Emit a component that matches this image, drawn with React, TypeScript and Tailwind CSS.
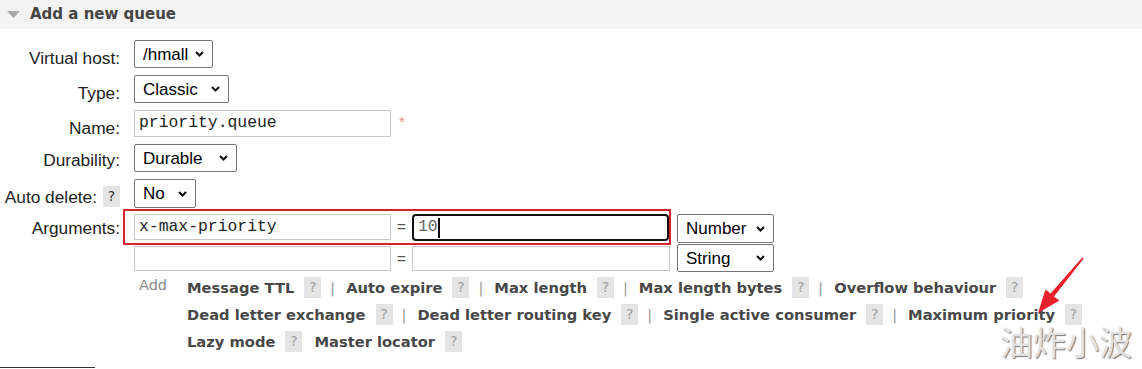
import React from 'react'

// ============================================================================
// Constants
// ============================================================================

const LINK_ROWS: { items: string[]; separators: boolean }[] = [
  {
    items: ['Message TTL', 'Auto expire', 'Max length', 'Max length bytes', 'Overflow behaviour'],
    separators: true,
  },
  {
    items: ['Dead letter exchange', 'Dead letter routing key', 'Single active consumer', 'Maximum priority'],
    separators: true,
  },
  { items: ['Lazy mode', 'Master locator'], separators: false },
]

// ============================================================================
// Small pieces
// ============================================================================

function Chevron() {
  return (
    <svg width="9" height="6" viewBox="0 0 9 6" className="shrink-0">
      <path d="M1 1l3.5 3.5L8 1" fill="none" stroke="#111" strokeWidth="2" />
    </svg>
  )
}

function Select({ value, className }: { value: string; className: string }) {
  return (
    <div
      className={`flex items-center justify-between border border-[#767676] rounded-[2px] bg-white pl-[8px] pr-[8px] text-[17px] text-black font-['Liberation_Sans',Arial,sans-serif] ${className}`}
    >
      <span className="leading-none">{value}</span>
      <Chevron />
    </div>
  )
}

function TextInput({ value, className }: { value?: string; className: string }) {
  return (
    <div
      className={`flex items-center border border-[#c8c8c8] bg-white pl-[4px] text-[16.4px] text-[#222] font-['Liberation_Mono','Courier_New',monospace] ${className}`}
    >
      {value}
    </div>
  )
}

function Help({ dark }: { dark?: boolean }) {
  return (
    <span
      className={`inline-flex items-center justify-center w-[17px] h-[21px] bg-[#e4e4e4] text-[14px] font-['DejaVu_Sans',Verdana,sans-serif] ${
        dark ? 'text-[#333]' : 'text-[#a0a0a0]'
      }`}
    >
      ?
    </span>
  )
}

function Row({
  label,
  labelPt,
  height,
  children,
}: {
  label: React.ReactNode
  labelPt: string
  height: string
  children: React.ReactNode
}) {
  return (
    <div className={`flex ${height}`}>
      <div
        className={`w-[120px] shrink-0 flex justify-end items-start gap-[6px] text-[17.3px] leading-[20px] text-[#222] ${labelPt}`}
      >
        {label}
      </div>
      <div className="ml-[14px] flex items-start">{children}</div>
    </div>
  )
}

// ============================================================================
// Component
// ============================================================================

export default function App() {
  return (
    <div className="relative w-[1142px] h-[369px] overflow-hidden bg-white font-['Liberation_Sans',Arial,sans-serif]">
      {/* Section header */}
      <div className="h-[29px] bg-[#f3f3f3] flex items-center pl-[7px]">
        <svg width="13" height="7" viewBox="0 0 13 7">
          <path d="M0 0h13L6.5 7z" fill="#a9a9a9" />
        </svg>
        <span className="ml-[10px] text-[15px] font-bold text-[#444] font-['DejaVu_Sans',Verdana,sans-serif]">
          Add a new queue
        </span>
      </div>

      {/* Form */}
      <div className="pt-[11px]">
        <Row label="Virtual host:" labelPt="pt-[8px]" height="h-[35px]">
          <Select value="/hmall" className="w-[79px] h-[28px]" />
        </Row>
        <Row label="Type:" labelPt="pt-[8px]" height="h-[35px]">
          <Select value="Classic" className="w-[95px] h-[28px]" />
        </Row>
        <Row label="Name:" labelPt="pt-[8px]" height="h-[34px]">
          <TextInput value="priority.queue" className="w-[257px] h-[27px]" />
          <span className="ml-[8px] mt-[4px] text-[15px] leading-none text-[#ee8888]">*</span>
        </Row>
        <Row label="Durability:" labelPt="pt-[6px]" height="h-[35px]">
          <Select value="Durable" className="w-[103px] h-[28px]" />
        </Row>
        <Row
          label={
            <>
              <span>Auto delete:</span>
              <span className="mt-[-2px]">
                <Help dark />
              </span>
            </>
          }
          labelPt="pt-[8px]"
          height="h-[35px]"
        >
          <Select value="No" className="w-[62px] h-[29px]" />
        </Row>
        <Row label="Arguments:" labelPt="pt-[4px]" height="h-[30px]">
          <TextInput value="x-max-priority" className="w-[257px] h-[26px]" />
          <span className="w-[21px] text-center text-[16px] leading-[26px] text-[#555]">=</span>
          <div className="w-[257px] h-[27px] border-2 border-[#111] rounded-[4px] flex items-center pl-[4px] text-[16.4px] text-[#666] font-['Liberation_Mono','Courier_New',monospace]">
            10
            <span className="w-[2px] h-[20px] bg-black" />
          </div>
          <Select value="Number" className="ml-[8px] w-[97px] h-[29px]" />
        </Row>
        <Row label="" labelPt="pt-0" height="h-[30px]">
          <TextInput className="mt-[2px] w-[257px] h-[25px]" />
          <span className="mt-[2px] w-[21px] text-center text-[16px] leading-[25px] text-[#555]">=</span>
          <TextInput className="mt-[2px] w-[258px] h-[25px]" />
          <Select value="String" className="ml-[7px] w-[97px] h-[28px]" />
        </Row>

        {/* Argument shortcuts */}
        <div className="flex pl-[139px] font-['DejaVu_Sans',Verdana,sans-serif]">
          <span className="w-[48px] shrink-0 text-[14.5px] leading-[23px] text-[#8a8a8a]">Add</span>
          <div className="flex flex-col">
            {LINK_ROWS.map((row, r) => (
              <div key={r} className="flex items-center h-[27px]">
                {row.items.map((item, i) => (
                  <React.Fragment key={item}>
                    {i > 0 && !row.separators && <span className="w-[12px]" />}
                    <span className="text-[14.7px] leading-[20px] font-bold text-[#484848] whitespace-nowrap">
                      {item}
                    </span>
                    <span className="ml-[10px] flex">
                      <Help />
                    </span>
                    {row.separators && i < row.items.length - 1 && (
                      <span className="ml-[9px] mr-[11px] text-[14.5px] leading-[20px] text-[#999]">|</span>
                    )}
                  </React.Fragment>
                ))}
              </div>
            ))}
          </div>
        </div>
      </div>

      {/* Annotation: red highlight box */}
      <div className="absolute left-[123px] top-[209px] w-[548px] h-[36px] border-2 border-[#d4222e]" />

      {/* Annotation: red arrow */}
      <svg className="absolute left-[1030px] top-[250px]" width="60" height="70" viewBox="0 0 60 70">
        <polygon
          points="8,63 15.5,39.5 20.5,43.5 52.3,7.4 53.7,8.6 24,46.5 29.5,50.5"
          fill="#e8202a"
        />
      </svg>

      {/* Watermark */}
      <div className="absolute left-[1000px] top-[327px] text-[33px] leading-[33px] text-[#e2e2e2] font-['Liberation_Sans','Noto_Sans_CJK_SC',sans-serif] [text-shadow:1px_1px_1px_#777]">
        油炸小波
      </div>

      {/* Next section edge */}
      <div className="absolute left-0 top-[367px] w-[95px] h-[2px] border-t border-[#333]" />
    </div>
  )
}
